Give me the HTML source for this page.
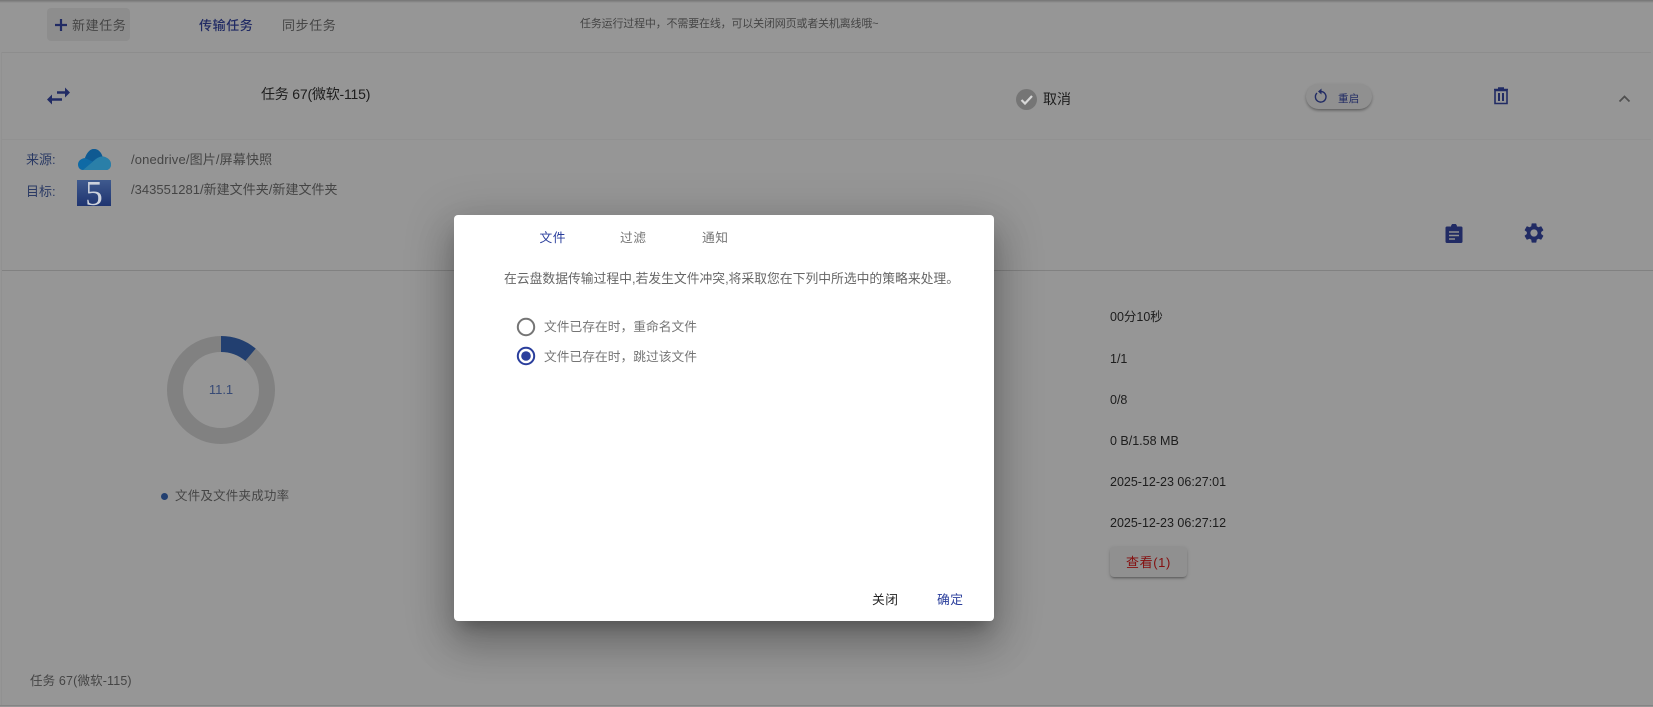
<!DOCTYPE html>
<html lang="zh"><head><meta charset="utf-8"><style>
html,body{margin:0;padding:0;width:1653px;height:707px;overflow:hidden;background:#fff}
body{font-family:"Liberation Sans","Noto Sans CJK SC",sans-serif;position:relative}
.t{position:absolute;white-space:nowrap;line-height:20px;height:20px}
.a{position:absolute}
.p{color:#3949ab}
.g{color:#757575}
.k{color:#333}
.top{z-index:2}
#ov{position:absolute;left:0;top:0;width:1653px;height:707px;background:rgba(0,0,0,.41);z-index:1}
#dlg{position:absolute;z-index:3;left:454px;top:215px;width:540px;height:406px;background:#fff;border-radius:4px;box-shadow:0 11px 15px -7px rgba(0,0,0,.25),0 24px 38px 3px rgba(0,0,0,.18),0 9px 46px 8px rgba(0,0,0,.15)}
#dlg .t{font-size:12.750px}
</style></head><body>
<div class="a" style="left:0;top:0;width:1653px;height:3px;background:linear-gradient(#c4c4c4,#fff)"></div>
<div class="a" style="left:47px;top:8px;width:83px;height:33px;background:#f0f0f0;border-radius:4px"></div>
<svg class="a" style="left:53px;top:17px" width="16" height="16" viewBox="0 0 16 16"><path d="M8 2v12M2 8h12" stroke="#3949ab" stroke-width="2.200" fill="none"/></svg>
<div class="t g" style="left:72px;top:16px;font-size:13px;letter-spacing:.6px">新建任务</div>
<div class="t p" style="left:199px;top:16px;font-size:13px;letter-spacing:.6px;font-weight:500">传输任务</div>
<div class="t g" style="left:282px;top:16px;font-size:13px;letter-spacing:.6px">同步任务</div>
<div class="t g" style="left:580px;top:14px;font-size:11px;letter-spacing:-.18px">任务运行过程中，不需要在线，可以关闭网页或者关机离线哦~</div>
<div class="a" style="left:2px;top:52px;width:1649px;height:1px;background:#f0f0f0"></div>
<div class="a" style="left:2px;top:139px;width:1649px;height:1px;background:#f7f7f7"></div>
<div class="a" style="left:2px;top:270px;width:1651px;height:1px;background:#dcdcdc"></div>
<div class="a" style="left:0;top:705px;width:1653px;height:1px;background:#e0e0e0"></div>
<div class="a" style="left:1px;top:52px;width:1px;height:653px;background:#f6f6f6"></div>

<svg class="a" style="left:46px;top:86px" width="25" height="20" viewBox="0 0 25 20"><path d="M3 13.500H16M22 6.500H11" stroke="#3949ab" stroke-width="2.400" fill="none"/><path d="M1 13.500 6 8.500V18.500zM24 6.500 19 1.500V11.500z" fill="#3949ab"/></svg>
<div class="t k" style="left:261px;top:84px;font-size:14px;letter-spacing:-.2px">任务 67(微软-115)</div>

<svg class="a top" style="left:1016px;top:89px" width="21" height="21" viewBox="0 0 21 21"><circle cx="10.500" cy="10.500" r="10.500" fill="#757575"/><path d="M5.500 11l3.500 3.500 7-7.500" stroke="#d8d8d8" stroke-width="2.200" fill="none"/></svg>
<div class="t k" style="left:1043px;top:89px;font-size:14px">取消</div>

<div class="a" style="left:1306px;top:84px;width:66px;height:25px;border-radius:13px;background:#f5f5f5;box-shadow:0 2px 3px -1px rgba(0,0,0,.35),0 1px 3px rgba(0,0,0,.15)"></div>
<svg class="a" style="left:1313px;top:88px" width="16" height="16" viewBox="0 0 16 16"><path d="M4 5A5.300 5.300 0 1 0 8 3.500" stroke="#3949ab" stroke-width="1.400" fill="none"/><path d="M8.500 .5v6L5 3.500z" fill="#3949ab"/></svg>
<div class="t p" style="left:1338px;top:89px;font-size:10.500px;letter-spacing:.3px">重启</div>

<svg class="a" style="left:1493px;top:86.500px" width="16" height="18" viewBox="0 0 16 18"><path d="M2 3.500h12V16.500H2zM1 2.500h14M5 1h6" stroke="#3949ab" stroke-width="1.600" fill="none"/><path d="M6 6v8M10 6v8" stroke="#3949ab" stroke-width="2" fill="none"/></svg>
<svg class="a" style="left:1618px;top:94px" width="13" height="10" viewBox="0 0 13 10"><path d="M1.500 7.500 6.500 2.500l5 5" stroke="#888" stroke-width="1.800" fill="none"/></svg>

<div class="t" style="left:26px;top:150px;font-size:13px;color:#4a64ab">来源:</div>
<svg class="a top" style="left:78px;top:149px" width="33" height="21" viewBox="0 0 33 21"><path d="M5 21C1.500 21 0 18 0 15.500 0 12 3 9.500 7 9 9 3.500 12 0 16 0c4 0 7 3 8.500 7.500C29 8 33 11 33 15.500 33 18.500 31 21 28 21z" fill="#0f6aa5"/><path d="M7 9C9 3.500 12 0 16 0c4 0 7 3 8.500 7.500-2.500 0-5 1-7 2.500l-3 2.500z" fill="#0f5a92"/><path d="M5 21 18 10c2-1.500 4-2.500 6.500-2.500C29 8 33 11 33 15.500 33 18.500 31 21 28 21z" fill="#2a7fa8"/></svg>
<div class="t g" style="left:131px;top:150px;font-size:13px;letter-spacing:.15px">/onedrive/图片/屏幕快照</div>
<div class="t" style="left:26px;top:182px;font-size:13px;color:#4a64ab">目标:</div>
<div class="a top" style="left:77px;top:180px;width:34px;height:26px;background:linear-gradient(#3f5a8e,#1f3470);overflow:hidden;text-align:center;color:#cdd2dc;font:35px/27px 'Liberation Serif',serif">5</div>
<div class="t g" style="left:131px;top:180px;font-size:13px;letter-spacing:.03px">/343551281/新建文件夹/新建文件夹</div>

<svg class="a" style="left:1445px;top:224px" width="18" height="19" viewBox="0 0 18 19"><path d="M2 2.500h4a3 3 0 0 1 6 0h4A1.500 1.500 0 0 1 17.500 4v13.500A1.500 1.500 0 0 1 16 19H2A1.500 1.500 0 0 1 .5 17.500V4A1.500 1.500 0 0 1 2 2.500z" fill="#3949ab"/><path d="M4 8h10M4 11.500h10M4 15h6" stroke="#f5f5f5" stroke-width="1.500"/></svg>
<svg class="a" style="left:1522px;top:221px" width="24" height="24" viewBox="0 0 24 24"><path fill="#3949ab" d="M19.140 12.940c.04-.3.060-.61.060-.94 0-.32-.02-.64-.07-.94l2.030-1.580a.49.490 0 0 0 .12-.61l-1.920-3.320a.488.488 0 0 0-.59-.22l-2.390.96c-.5-.38-1.030-.7-1.620-.94l-.36-2.540a.484.484 0 0 0-.48-.41h-3.840c-.24 0-.43.170-.47.410l-.36 2.540c-.59.240-1.130.570-1.620.94l-2.390-.96c-.22-.08-.47 0-.59.220L2.740 8.870c-.12.210-.08.470.12.610l2.030 1.580c-.05.300-.09.630-.09.940s.02.640.07.940l-2.030 1.580a.49.490 0 0 0-.12.610l1.920 3.320c.12.220.37.290.59.220l2.390-.96c.5.380 1.030.7 1.620.94l.36 2.540c.05.240.24.410.48.410h3.840c.24 0 .44-.17.47-.41l.36-2.540c.59-.24 1.130-.56 1.620-.94l2.390.96c.22.080.47 0 .59-.22l1.920-3.320c.12-.22.070-.47-.12-.61l-2.010-1.580zM12 15.600c-1.980 0-3.600-1.620-3.600-3.600s1.620-3.600 3.600-3.600 3.600 1.620 3.600 3.600-1.620 3.600-3.600 3.600z"/></svg>

<svg class="a" style="left:160px;top:329px" width="122" height="122" viewBox="0 0 122 122"><circle cx="61" cy="61" r="46" fill="none" stroke="#dcdcdc" stroke-width="16"/><path d="M61 7A54 54 0 0 1 95.700 19.600L85.400 31.900A38 38 0 0 0 61 23z" fill="#3a6cbe"/></svg>
<div class="t" style="left:181px;top:380px;width:80px;text-align:center;font-size:13px;color:#5f80c8">11.1</div>
<div class="a" style="left:161px;top:493px;width:7px;height:7px;border-radius:50%;background:#3a6cbe"></div>
<div class="t g" style="left:175px;top:486px;font-size:12.500px;letter-spacing:.2px">文件及文件夹成功率</div>

<div class="t k" style="left:1110px;top:307px;font-size:12.500px">00分10秒</div>
<div class="t k" style="left:1110px;top:349px;font-size:12.500px">1/1</div>
<div class="t k" style="left:1110px;top:390px;font-size:12.500px">0/8</div>
<div class="t k" style="left:1110px;top:431px;font-size:12.500px">0 B/1.58 MB</div>
<div class="t k" style="left:1110px;top:472px;font-size:12.500px">2025-12-23 06:27:01</div>
<div class="t k" style="left:1110px;top:513px;font-size:12.500px">2025-12-23 06:27:12</div>
<div class="a" style="left:1110px;top:547px;width:77px;height:30px;border-radius:4px;background:#f5f5f5;box-shadow:0 2px 2px -1px rgba(0,0,0,.35),0 1px 4px rgba(0,0,0,.15)"></div>
<div class="t" style="left:1110px;top:553px;width:77px;text-align:center;font-size:13px;letter-spacing:.6px;color:#e01b1b">查看(1)</div>
<div class="t g" style="left:30px;top:671px;font-size:12.500px;letter-spacing:.15px">任务 67(微软-115)</div>

<div id="ov"></div>
<div id="dlg">
<div class="t" style="left:85.500px;top:12.500px;color:#2a3e9c;letter-spacing:.5px">文件</div>
<div class="t" style="left:166px;top:12.500px;color:#757575;letter-spacing:.5px">过滤</div>
<div class="t" style="left:248px;top:12.500px;color:#757575;letter-spacing:.5px">通知</div>
<div class="t" style="left:50px;top:54px;color:#666;font-size:12.800px">在云盘数据传输过程中,若发生文件冲突,将采取您在下列中所选中的策略来处理。</div>
<svg class="a" style="left:62px;top:102px" width="20" height="20" viewBox="0 0 20 20"><circle cx="10" cy="10" r="8.200" fill="none" stroke="#757575" stroke-width="2"/></svg>
<div class="t" style="left:90px;top:102px;color:#757575">文件已存在时，重命名文件</div>
<svg class="a" style="left:62px;top:131px" width="20" height="20" viewBox="0 0 20 20"><circle cx="10" cy="10" r="8.200" fill="none" stroke="#2a3e9c" stroke-width="2"/><circle cx="10" cy="10" r="4.800" fill="#2a3e9c"/></svg>
<div class="t" style="left:90px;top:132px;color:#757575">文件已存在时，跳过该文件</div>
<div class="t" style="left:418px;top:375px;color:#222;letter-spacing:.5px">关闭</div>
<div class="t" style="left:483px;top:375px;color:#2a3e9c;letter-spacing:.5px">确定</div>
</div>
</body></html>
